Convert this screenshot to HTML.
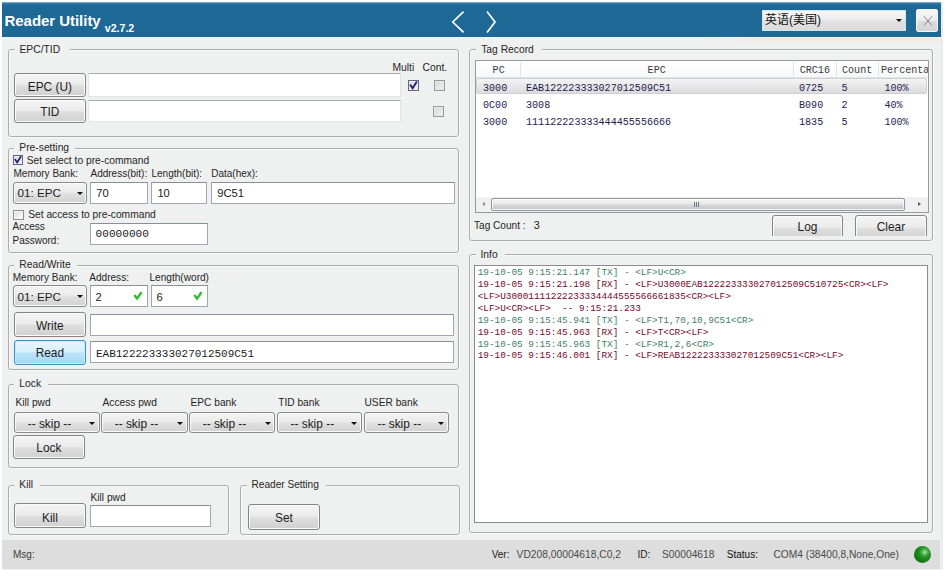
<!DOCTYPE html>
<html lang="en">
<head>
<meta charset="utf-8">
<title>Reader Utility</title>
<style>
*{box-sizing:border-box;margin:0;padding:0}
html,body{width:947px;height:579px;overflow:hidden;background:#fff}
body{position:relative;font-family:"Liberation Sans","Noto Sans CJK SC",sans-serif;font-size:10.3px;color:#222;line-height:1}
.a{position:absolute;white-space:nowrap;line-height:1}
#win{left:2px;top:2px;width:939px;height:568px;background:#eff0f0}
#edge{left:941px;top:2px;width:2px;height:568px;background:#e9ebec}
#hdr{left:2px;top:2px;width:939px;height:35px;background:linear-gradient(#9dc0d6 0,#4a86ab 1px,#2a6f9b 2px,#1e6896 3px)}
#hdrline{left:2px;top:37px;width:939px;height:1px;background:#e6f6fb}
.grp{border:1px solid #acacac;border-radius:3px;box-shadow:inset 1px 1px 0 #f9f9f9, 1px 1px 0 #f9f9f9}
.leg{background:#eff0f0}
.lb{color:#262626}
.btn{border:1px solid #858585;border-radius:3px;background:linear-gradient(#f4f4f4 0%,#ececec 46%,#dedede 54%,#d0d0d0 100%);box-shadow:inset 0 0 0 1px #fafafa}
.btn.hot{border-color:#3a93cb;background:linear-gradient(#e9f6fd 0%,#d8effb 46%,#bbe4fa 54%,#a2d8f5 100%);box-shadow:inset 0 0 0 1px #c6ecfb}
.bt{text-align:center;color:#1e1e1e}
.inp{border:1px solid #a0a6b4;border-top-color:#8a8f9c;background:#fff}
.inp.lite{border-color:#e2e4e8;border-top-color:#a9abb2}
.it{color:#1a1a1a}
.sel{border:1px solid #8a8a8a;border-radius:3px;background:linear-gradient(#f3f3f3 0%,#ebebeb 46%,#dfdfdf 54%,#d2d2d2 100%);box-shadow:inset 0 0 0 1px #fafafa}
.st1{color:#1e1e1e}
.arr{width:0;height:0;border-left:3.2px solid transparent;border-right:3.2px solid transparent;border-top:3.8px solid #111}
.cb{width:11px;height:11px;border:1px solid #8e8f8f;background:linear-gradient(135deg,#d9dadb,#ffffff);box-shadow:inset 0 0 0 1px #f4f4f4}
.cb.dim{border-color:#999999;background:linear-gradient(135deg,#d6d6d6,#f3f3f3);box-shadow:inset 0 0 0 1px #e9e9e9}
.cb.on{border-color:#62648a;background:linear-gradient(135deg,#dcdcf0,#f4f4fc);box-shadow:inset 0 0 0 1px #ececf8}
.mono{font-family:"Liberation Mono","DejaVu Sans Mono",monospace}
#status{left:2px;top:540.3px;width:938px;height:29.2px;background:#dddddd}
#led{left:914.2px;top:545.6px;width:17.2px;height:17.2px;border-radius:50%;background:radial-gradient(circle at 63% 36%,#c4efbe 0%,#62bb5c 13%,#218f21 36%,#12780f 70%,#0b640c 100%)}
.hsel{border:1px solid #cfe6f2;background:linear-gradient(#f6f6f6 0%,#ededed 48%,#e2e2e2 52%,#dcdcdc 100%)}
.hclose{border:1px solid #f4f4f4;border-radius:2px;background:linear-gradient(#f7f7f7 0%,#eeeeee 48%,#dedede 52%,#d3d3d3 100%)}
.lv{border:1px solid #9a9a9a;background:#fff}
#lvh{left:476px;top:61px;width:451.7px;height:17px;background:linear-gradient(#ffffff,#f7f8fa);border-bottom:1px solid #e3e4e8}
.vdiv{width:1px;background:#e2e3e6}
.lvhd{color:#3a3a3a}
.lvt{color:#1d1d4f}
.lvsel{background:linear-gradient(#f4f4f5,#dcdcde);border:1px solid #d0d0d3;border-radius:2px}
.sbt{background:#f0f0f0}
.sbth{border:1px solid #95979b;border-radius:2px;background:linear-gradient(#f5f5f5 0%,#e9e9ea 40%,#d6d7d9 55%,#c9cacc 88%,#e8e8e8 100%);box-shadow:inset 0 0 0 1px rgba(255,255,255,.7)}
.ta{border:1px solid #8c8c8c;background:#fff}
.tx{color:#3f7f66}
.rx{color:#760a2a}
</style>
</head>
<body>
<div class="a" id="win"></div>
<div class="a" id="edge"></div>
<div class="a" id="hdr"></div>
<div class="a" id="hdrline"></div>
<div class="a " style="left:4.50px;top:13px;font-size:15px;font-weight:bold;color:#fff;letter-spacing:-0.04px">Reader Utility</div>
<div class="a " style="left:104.80px;top:23px;font-size:10.6px;font-weight:bold;color:#fff">v2.7.2</div>
<svg class="a" style="left:448px;top:8px" width="54" height="28" viewBox="448 8 54 28"><path d="M463.6 11.6 L452.8 22 L463.6 32.4" fill="none" stroke="#fff" stroke-width="1.7"/><path d="M487 11.6 L495 22 L487 32.4" fill="none" stroke="#fff" stroke-width="1.7"/></svg>
<div class="a hsel" style="left:762px;top:10px;width:144px;height:21px;"></div>
<div class="a " style="left:765.00px;top:13.74px;font-size:12px;color:#111">英语(美国)</div>
<div class="a arr" style="left:896.3px;top:18.7px"></div>
<div class="a hclose" style="left:916px;top:9px;width:22px;height:23px;"><svg width="22" height="22" viewBox="0 0 22 22" style="position:absolute;left:0;top:0"><path d="M6.9 6.2 L15.1 15.6 M15.1 6.2 L6.9 15.6" stroke="#858585" stroke-width="1" fill="none"/></svg></div>
<div class="a" style="left:700px;top:38px;width:241px;height:3px;background:linear-gradient(90deg,rgba(253,232,215,0),rgba(253,232,215,0.9) 30%)"></div>
<div class="a grp" style="left:8px;top:49px;width:451px;height:88px"></div>
<div class="a leg" style="left:14.50px;top:48px;width:55.50px;height:4px"></div>
<div class="a lb" style="left:19.50px;top:45px;font-size:10.3px;">EPC/TID</div>
<div class="a btn " style="left:14px;top:73px;width:72px;height:24px;"></div>
<div class="a bt" style="left:14.20px;top:82px;font-size:11.9px;width:71.40px;">EPC (U)</div>
<div class="a btn " style="left:14px;top:99px;width:72px;height:24px;"></div>
<div class="a bt" style="left:14.20px;top:107px;font-size:11.9px;width:71.40px;">TID</div>
<div class="a inp lite" style="left:88px;top:73px;width:313px;height:24px;"></div>
<div class="a inp lite" style="left:88px;top:100px;width:313px;height:22px;"></div>
<div class="a lb" style="left:392.50px;top:63px;font-size:10.3px;">Multi</div>
<div class="a lb" style="left:422.50px;top:63px;font-size:10.3px;">Cont.</div>
<div class="a cb on" style="left:408px;top:80px;width:11px;height:11px"><svg width="11" height="11" viewBox="0 0 11 11" style="position:absolute;left:-1px;top:-1px"><path d="M2.6 5.2 L4.6 8.2 L8.4 2.2" fill="none" stroke="#23245f" stroke-width="1.9" stroke-linecap="square"/></svg></div>
<div class="a cb dim" style="left:434px;top:80px;width:11px;height:11px"></div>
<div class="a cb dim" style="left:433px;top:106px;width:11px;height:11px"></div>
<div class="a grp" style="left:8px;top:148px;width:451px;height:105px"></div>
<div class="a leg" style="left:14.30px;top:147px;width:61.20px;height:4px"></div>
<div class="a lb" style="left:19.30px;top:143px;font-size:10.3px;">Pre-setting</div>
<div class="a cb on" style="left:13px;top:155px;width:10px;height:10px"><svg width="10" height="10" viewBox="0 0 11 11" style="position:absolute;left:-1px;top:-1px"><path d="M2.6 5.2 L4.6 8.2 L8.4 2.2" fill="none" stroke="#23245f" stroke-width="1.9" stroke-linecap="square"/></svg></div>
<div class="a lb" style="left:26.70px;top:156px;font-size:10.25px;">Set select to pre-command</div>
<div class="a lb" style="left:13.50px;top:169px;font-size:10px;">Memory Bank:</div>
<div class="a lb" style="left:90.50px;top:169px;font-size:10px;">Address(bit):</div>
<div class="a lb" style="left:151.50px;top:169px;font-size:10px;">Length(bit):</div>
<div class="a lb" style="left:211.20px;top:169px;font-size:10px;">Data(hex):</div>
<div class="a sel" style="left:13px;top:182px;width:74px;height:22px;"></div>
<div class="a st1" style="left:17.50px;top:187px;font-size:11.7px;">01: EPC</div>
<div class="a arr" style="left:77.00px;top:192.00px"></div>
<div class="a inp" style="left:90px;top:182px;width:58px;height:22px;"></div>
<div class="a it" style="left:96.20px;top:188px;font-size:11.2px;">70</div>
<div class="a inp" style="left:151px;top:182px;width:56px;height:22px;"></div>
<div class="a it" style="left:157.40px;top:188px;font-size:11.2px;">10</div>
<div class="a inp" style="left:211px;top:182px;width:244px;height:22px;"></div>
<div class="a it" style="left:217.20px;top:188px;font-size:11.2px;">9C51</div>
<div class="a cb" style="left:13px;top:210px;width:11px;height:10px"></div>
<div class="a lb" style="left:28.20px;top:210px;font-size:10.25px;">Set access to pre-command</div>
<div class="a lb" style="left:12.50px;top:222px;font-size:10px;">Access</div>
<div class="a lb" style="left:12.50px;top:236px;font-size:10px;">Password:</div>
<div class="a inp" style="left:90px;top:223px;width:118px;height:22px;"></div>
<div class="a it mono" style="left:95.60px;top:229px;font-size:11.1px;">00000000</div>
<div class="a grp" style="left:8px;top:265px;width:451px;height:105px"></div>
<div class="a leg" style="left:14.30px;top:264px;width:63.20px;height:4px"></div>
<div class="a lb" style="left:19.30px;top:260px;font-size:10.3px;">Read/Write</div>
<div class="a lb" style="left:12.70px;top:273px;font-size:10.05px;">Memory Bank:</div>
<div class="a lb" style="left:89.20px;top:273px;font-size:10.1px;">Address:</div>
<div class="a lb" style="left:149.50px;top:273px;font-size:10.1px;">Length(word)</div>
<div class="a sel" style="left:13px;top:285px;width:74px;height:22px;"></div>
<div class="a st1" style="left:17.50px;top:291px;font-size:11.7px;">01: EPC</div>
<div class="a arr" style="left:77.20px;top:295.30px"></div>
<div class="a inp" style="left:90px;top:285px;width:58px;height:22px;"></div>
<div class="a it" style="left:95.60px;top:292px;font-size:11.2px;">2</div>
<svg class="a" style="left:133.4px;top:291px" width="10" height="10" viewBox="0 0 10 10"><path d="M0.3 4.7 L2.3 3.2 L3.9 5.6 L7.6 0.4 L9.6 1.8 L4.1 9.4 Z" fill="#33ba38"/></svg>
<div class="a inp" style="left:151px;top:285px;width:57px;height:22px;"></div>
<div class="a it" style="left:156.60px;top:292px;font-size:11.2px;">6</div>
<svg class="a" style="left:193.4px;top:291px" width="10" height="10" viewBox="0 0 10 10"><path d="M0.3 4.7 L2.3 3.2 L3.9 5.6 L7.6 0.4 L9.6 1.8 L4.1 9.4 Z" fill="#33ba38"/></svg>
<div class="a btn " style="left:14px;top:312px;width:72px;height:25px;"></div>
<div class="a bt" style="left:14.20px;top:321px;font-size:11.9px;width:71.40px;">Write</div>
<div class="a inp" style="left:90px;top:314px;width:364px;height:22px;"></div>
<div class="a btn hot" style="left:14px;top:340px;width:72px;height:25px;"></div>
<div class="a bt" style="left:14.20px;top:348px;font-size:11.9px;width:71.40px;">Read</div>
<div class="a inp" style="left:90px;top:341px;width:364px;height:22px;"></div>
<div class="a it mono" style="left:96.00px;top:349px;font-size:10.97px;">EAB122223333027012509C51</div>
<div class="a grp" style="left:8px;top:384px;width:451px;height:84px"></div>
<div class="a leg" style="left:14.30px;top:383px;width:33.70px;height:4px"></div>
<div class="a lb" style="left:19.30px;top:379px;font-size:10.3px;">Lock</div>
<div class="a lb" style="left:15.50px;top:398px;font-size:10.2px;">Kill pwd</div>
<div class="a lb" style="left:102.50px;top:398px;font-size:10.2px;">Access pwd</div>
<div class="a lb" style="left:190.50px;top:398px;font-size:10.2px;">EPC bank</div>
<div class="a lb" style="left:278.20px;top:398px;font-size:10.2px;">TID bank</div>
<div class="a lb" style="left:364.50px;top:398px;font-size:10.2px;">USER bank</div>
<div class="a sel" style="left:14px;top:412px;width:86px;height:21px;"></div>
<div class="a st1" style="left:27.70px;top:419px;font-size:11.9px;">-- skip --</div>
<div class="a arr" style="left:89.40px;top:422.00px"></div>
<div class="a sel" style="left:101px;top:412px;width:87px;height:21px;"></div>
<div class="a st1" style="left:114.70px;top:419px;font-size:11.9px;">-- skip --</div>
<div class="a arr" style="left:177.10px;top:422.00px"></div>
<div class="a sel" style="left:189px;top:412px;width:86px;height:21px;"></div>
<div class="a st1" style="left:202.70px;top:419px;font-size:11.9px;">-- skip --</div>
<div class="a arr" style="left:264.60px;top:422.00px"></div>
<div class="a sel" style="left:277px;top:412px;width:85px;height:21px;"></div>
<div class="a st1" style="left:290.50px;top:419px;font-size:11.9px;">-- skip --</div>
<div class="a arr" style="left:351.40px;top:422.00px"></div>
<div class="a sel" style="left:364px;top:412px;width:85px;height:21px;"></div>
<div class="a st1" style="left:377.50px;top:419px;font-size:11.9px;">-- skip --</div>
<div class="a arr" style="left:438.40px;top:422.00px"></div>
<div class="a btn " style="left:13px;top:435px;width:72px;height:24px;"></div>
<div class="a bt" style="left:13.30px;top:443px;font-size:11.9px;width:71.20px;">Lock</div>
<div class="a grp" style="left:8px;top:485px;width:221px;height:50px"></div>
<div class="a leg" style="left:14.30px;top:484px;width:25.70px;height:4px"></div>
<div class="a lb" style="left:19.30px;top:480px;font-size:10.3px;">Kill</div>
<div class="a lb" style="left:90.50px;top:493px;font-size:10.2px;">Kill pwd</div>
<div class="a btn " style="left:14px;top:503px;width:72px;height:25px;"></div>
<div class="a bt" style="left:14.20px;top:513px;font-size:11.9px;width:71.40px;">Kill</div>
<div class="a inp" style="left:90px;top:505px;width:121px;height:22px;"></div>
<div class="a grp" style="left:240px;top:485px;width:220px;height:50px"></div>
<div class="a leg" style="left:246.50px;top:484px;width:79.80px;height:4px"></div>
<div class="a lb" style="left:251.50px;top:480px;font-size:10.1px;">Reader Setting</div>
<div class="a btn " style="left:248px;top:504px;width:72px;height:26px;"></div>
<div class="a bt" style="left:248.20px;top:513px;font-size:11.9px;width:71.40px;">Set</div>
<div class="a" id="status"></div>
<div class="a " style="left:13.00px;top:550px;font-size:10px;color:#3c3c3c">Msg:</div>
<div class="a " style="left:491.70px;top:550px;font-size:10px;color:#222">Ver:</div>
<div class="a " style="left:516.60px;top:550px;font-size:10.26px;color:#4a4a4a">VD208,00004618,C0,2</div>
<div class="a " style="left:637.50px;top:550px;font-size:10px;color:#222">ID:</div>
<div class="a " style="left:662.00px;top:550px;font-size:10.26px;color:#4a4a4a">S00004618</div>
<div class="a " style="left:726.80px;top:550px;font-size:10px;color:#111">Status:</div>
<div class="a " style="left:773.40px;top:550px;font-size:10.23px;color:#4a4a4a">COM4 (38400,8,None,One)</div>
<div class="a" id="led"></div>
<div class="a grp" style="left:469px;top:49px;width:464px;height:192px"></div>
<div class="a leg" style="left:476.20px;top:48px;width:65.50px;height:4px"></div>
<div class="a lb" style="left:481.20px;top:45px;font-size:10.3px;">Tag Record</div>
<div class="a lv" style="left:475px;top:60px;width:454px;height:153px;"></div>
<div class="a" id="lvh"></div>
<div class="a vdiv" style="left:519.8px;top:62px;height:15px"></div>
<div class="a vdiv" style="left:793.3px;top:62px;height:15px"></div>
<div class="a vdiv" style="left:836.2px;top:62px;height:15px"></div>
<div class="a vdiv" style="left:878.0px;top:62px;height:15px"></div>
<div class="a mono lvhd" style="left:492.60px;top:66px;font-size:10.08px;">PC</div>
<div class="a mono lvhd" style="left:647.60px;top:66px;font-size:10.08px;">EPC</div>
<div class="a mono lvhd" style="left:799.70px;top:66px;font-size:10.08px;">CRC16</div>
<div class="a mono lvhd" style="left:842.00px;top:66px;font-size:10.08px;">Count</div>
<div class="a mono lvhd" style="left:881.00px;top:66px;font-size:10.08px;width:46.5px;overflow:hidden;">Percentage</div>
<div class="a lvsel" style="left:476px;top:78px;width:451px;height:16px;"></div>
<div class="a mono lvt" style="left:483.00px;top:84px;font-size:10.08px;">3000</div>
<div class="a mono lvt" style="left:526.00px;top:84px;font-size:10.08px;">EAB122223333027012509C51</div>
<div class="a mono lvt" style="left:799.00px;top:84px;font-size:10.08px;">0725</div>
<div class="a mono lvt" style="left:841.60px;top:84px;font-size:10.08px;">5</div>
<div class="a mono lvt" style="left:884.40px;top:84px;font-size:10.08px;">100%</div>
<div class="a mono lvt" style="left:483.00px;top:101px;font-size:10.08px;">0C00</div>
<div class="a mono lvt" style="left:526.00px;top:101px;font-size:10.08px;">3008</div>
<div class="a mono lvt" style="left:799.00px;top:101px;font-size:10.08px;">B090</div>
<div class="a mono lvt" style="left:841.60px;top:101px;font-size:10.08px;">2</div>
<div class="a mono lvt" style="left:884.40px;top:101px;font-size:10.08px;">40%</div>
<div class="a mono lvt" style="left:483.00px;top:118px;font-size:10.08px;">3000</div>
<div class="a mono lvt" style="left:526.00px;top:118px;font-size:10.08px;">111122223333444455556666</div>
<div class="a mono lvt" style="left:799.00px;top:118px;font-size:10.08px;">1835</div>
<div class="a mono lvt" style="left:841.60px;top:118px;font-size:10.08px;">5</div>
<div class="a mono lvt" style="left:884.40px;top:118px;font-size:10.08px;">100%</div>
<div class="a sbt" style="left:476px;top:197px;width:452px;height:15px;"></div>
<div class="a sbth" style="left:491px;top:198px;width:414px;height:13px;"></div>
<div class="a" style="left:694px;top:202px;width:5px;height:5px;background:repeating-linear-gradient(90deg,#6d7a8a 0 1px,transparent 1px 2px)"></div>
<div class="a" style="left:481.5px;top:201.6px;width:0;height:0;border-top:2.3px solid transparent;border-bottom:2.3px solid transparent;border-right:3.6px solid #8a8a8a"></div>
<div class="a" style="left:917.5px;top:202px;width:0;height:0;border-top:2.4px solid transparent;border-bottom:2.4px solid transparent;border-left:3.5px solid #5a5a5a"></div>
<div class="a lb" style="left:474.00px;top:221px;font-size:10.1px;">Tag Count :</div>
<div class="a lb" style="left:533.70px;top:220px;font-size:10.8px;">3</div>
<div class="a btn " style="left:772px;top:215px;width:71px;height:26px;"></div>
<div class="a bt" style="left:772.00px;top:222px;font-size:11.9px;width:71.00px;">Log</div>
<div class="a btn " style="left:855px;top:215px;width:72px;height:26px;"></div>
<div class="a bt" style="left:855.40px;top:222px;font-size:11.9px;width:71.20px;">Clear</div>
<div class="a" style="left:770px;top:236px;width:160px;height:4px;background:#eff0f0"></div>
<div class="a" style="left:770px;top:240px;width:160px;height:1px;background:#acacac"></div>
<div class="a" style="left:770px;top:241px;width:160px;height:1px;background:#f9f9f9"></div>
<div class="a" style="left:770px;top:242px;width:160px;height:3px;background:#eff0f0"></div>
<div class="a grp" style="left:469px;top:254px;width:464px;height:279px"></div>
<div class="a leg" style="left:475.50px;top:253px;width:29.50px;height:4px"></div>
<div class="a lb" style="left:480.50px;top:250px;font-size:10.3px;">Info</div>
<div class="a ta" style="left:474px;top:265px;width:454px;height:258px;"></div>
<div class="a mono tx" style="left:477.70px;top:268px;font-size:9.39px;white-space:pre">19-10-05 9:15:21.147 [TX] - &lt;LF&gt;U&lt;CR&gt;</div>
<div class="a mono rx" style="left:477.70px;top:280px;font-size:9.39px;white-space:pre">19-10-05 9:15:21.198 [RX] - &lt;LF&gt;U3000EAB122223333027012509C510725&lt;CR&gt;&lt;LF&gt;</div>
<div class="a mono rx" style="left:477.70px;top:292px;font-size:9.39px;white-space:pre">&lt;LF&gt;U30001111222233334444555566661835&lt;CR&gt;&lt;LF&gt;</div>
<div class="a mono rx" style="left:477.70px;top:304px;font-size:9.39px;white-space:pre">&lt;LF&gt;U&lt;CR&gt;&lt;LF&gt;  -- 9:15:21.233</div>
<div class="a mono tx" style="left:477.70px;top:316px;font-size:9.39px;white-space:pre">19-10-05 9:15:45.941 [TX] - &lt;LF&gt;T1,70,10,9C51&lt;CR&gt;</div>
<div class="a mono rx" style="left:477.70px;top:328px;font-size:9.39px;white-space:pre">19-10-05 9:15:45.963 [RX] - &lt;LF&gt;T&lt;CR&gt;&lt;LF&gt;</div>
<div class="a mono tx" style="left:477.70px;top:340px;font-size:9.39px;white-space:pre">19-10-05 9:15:45.963 [TX] - &lt;LF&gt;R1,2,6&lt;CR&gt;</div>
<div class="a mono rx" style="left:477.70px;top:351px;font-size:9.39px;white-space:pre">19-10-05 9:15:46.001 [RX] - &lt;LF&gt;REAB122223333027012509C51&lt;CR&gt;&lt;LF&gt;</div>
</body>
</html>
